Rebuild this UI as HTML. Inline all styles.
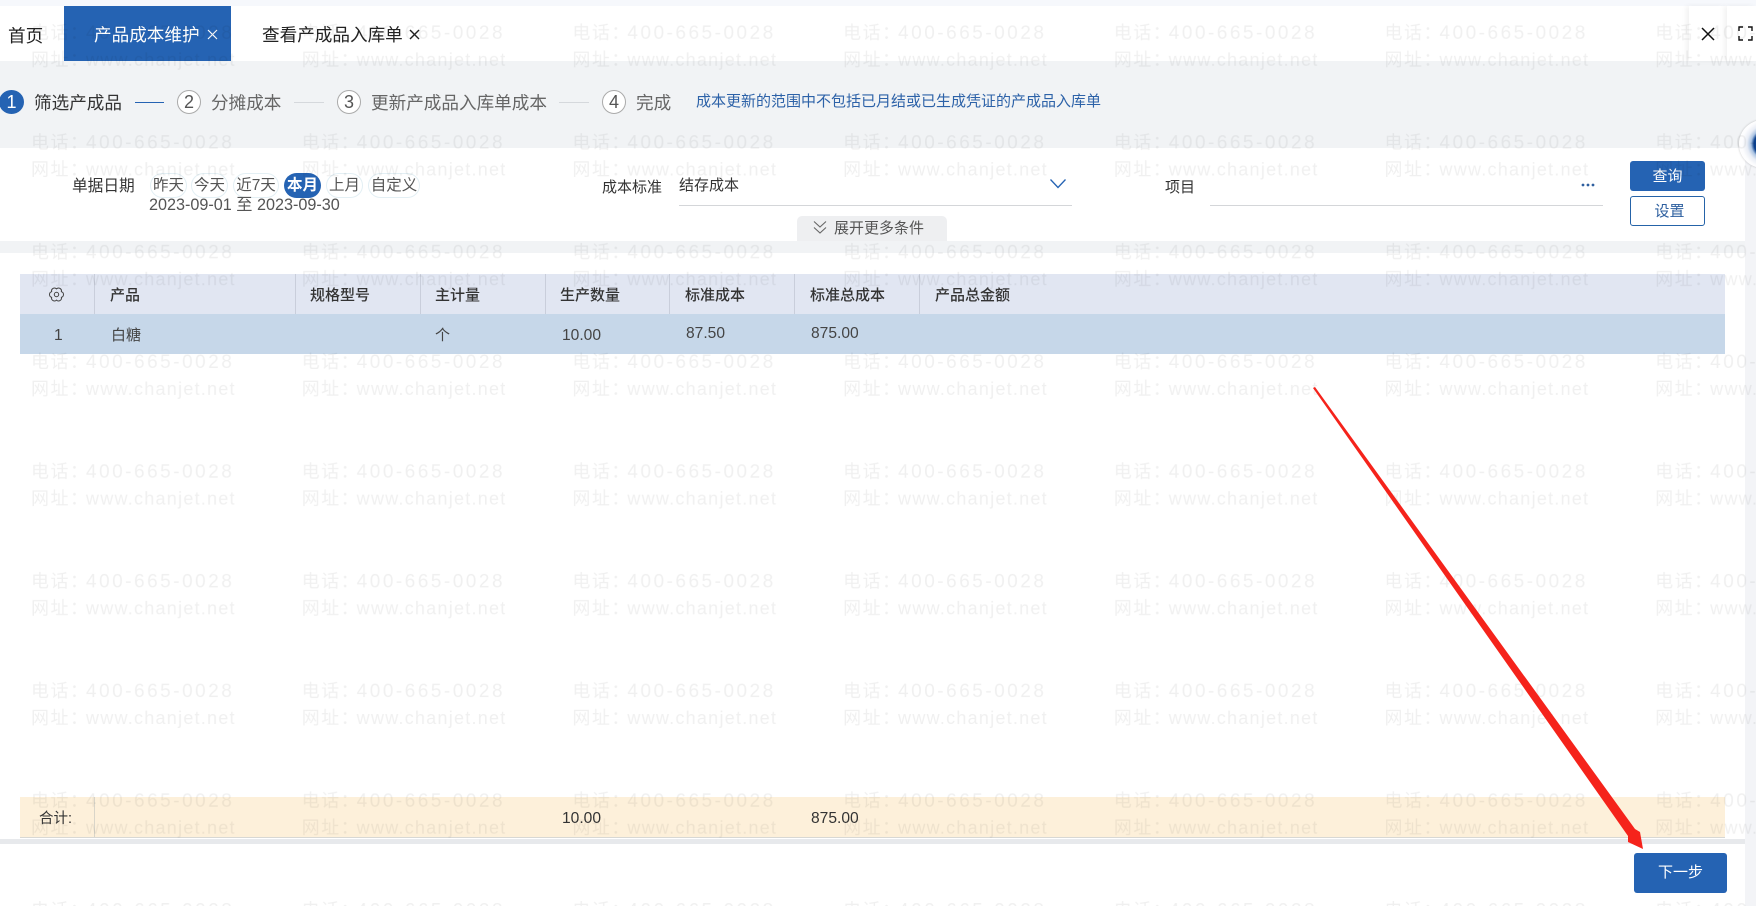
<!DOCTYPE html>
<html lang="zh-CN"><head><meta charset="utf-8"><title>产品成本维护</title>
<style>
html,body{margin:0;padding:0;background:#fff}
#p{position:relative;width:1756px;height:906px;overflow:hidden;background:#fff;font-family:"Liberation Sans","Noto Sans CJK SC",sans-serif;color:#333}
#p div,#p span.a{position:absolute;white-space:nowrap}
.t{line-height:20px;font-size:15px;height:20px}
.c{width:22px;height:22px;border:1px solid #aaa;border-radius:50%;text-align:center;line-height:22px;font-size:18px;color:#555;background:#fff}
.s{font-size:17.6px;line-height:24px;height:24px;top:91px;color:#666}
.l{height:1px;top:102px;background:#d5d8dc}
.chip{top:173px;height:23px;border:1px solid #e3eff4;border-radius:13px;text-align:center;line-height:23px;font-size:15.5px;color:#555;box-sizing:content-box}
.h{top:286px;font-weight:500;color:#333}
.v{width:1px;top:274px;height:40px;background:#c9cedb}
.r{top:326px;color:#444}
.n{font-size:15.6px}
</style></head><body><div id="p">
<div style="left:0;top:0;width:1756px;height:6px;background:#f6f8fc"></div>
<div style="left:0;top:61px;width:1756px;height:87px;background:#f1f3f5"></div>
<div style="left:1745px;top:148px;width:11px;height:758px;background:#f3f4f7"></div>
<div style="left:0;top:241px;width:1745px;height:12px;background:#f1f3f5"></div>

<div style="left:64px;top:6px;width:167px;height:55px;background:#2563b3"></div>
<div class="t" style="left:8px;top:25px;font-size:17.6px;line-height:22px;height:22px;color:#222">首页</div>
<div class="t" style="left:94px;top:24px;font-size:17.6px;line-height:22px;height:22px;color:#fff">产品成本维护</div>
<svg style="position:absolute;left:207px;top:29px" width="11" height="11" viewBox="0 0 11 11"><path d="M1 1L10 10M10 1L1 10" stroke="#fff" stroke-width="1.2" fill="none"/></svg>
<div class="t" style="left:262px;top:24px;font-size:17.6px;line-height:22px;height:22px;color:#222">查看产成品入库单</div>
<svg style="position:absolute;left:409px;top:29px" width="11" height="11" viewBox="0 0 11 11"><path d="M1 1L10 10M10 1L1 10" stroke="#222" stroke-width="1.4" fill="none"/></svg>

<div style="left:1689px;top:6px;width:38px;height:55px;background:#fff;box-shadow:-3px 0 5px rgba(0,0,0,.05)"></div>
<div style="left:1727px;top:6px;width:29px;height:55px;background:#fff;box-shadow:-3px 0 5px rgba(0,0,0,.05)"></div>
<svg style="position:absolute;left:1701px;top:27px" width="14" height="14" viewBox="0 0 14 14"><path d="M1 1L13 13M13 1L1 13" stroke="#111" stroke-width="1.5" fill="none"/></svg>
<svg style="position:absolute;left:1738px;top:26px" width="15" height="15" viewBox="0 0 15 15"><path d="M5 1H1V5M10 1H14V5M5 14H1V10M10 14H14V10" stroke="#111" stroke-width="1.4" fill="none"/></svg>

<div style="left:-1px;top:90px;width:25px;height:24px;border-radius:50%;background:#2563b3;color:#fff;text-align:center;line-height:24px;font-size:18px">1</div>
<div class="s" style="left:34px;color:#333">筛选产成品</div>
<div class="l" style="left:135px;width:29px;background:#2563b3"></div>
<div class="c" style="left:177px;top:90px">2</div>
<div class="s" style="left:211px">分摊成本</div>
<div class="l" style="left:294px;width:30px"></div>
<div class="c" style="left:337px;top:90px">3</div>
<div class="s" style="left:371px">更新产成品入库单成本</div>
<div class="l" style="left:559px;width:30px"></div>
<div class="c" style="left:602px;top:90px">4</div>
<div class="s" style="left:636px">完成</div>
<div class="t" style="left:696px;top:92px;color:#2d62a8">成本更新的范围中不包括已月结或已生成凭证的产成品入库单</div>

<div class="t" style="left:72px;top:177px;font-size:15.7px;color:#333">单据日期</div>
<div class="chip" style="left:150px;width:35px">昨天</div>
<div class="chip" style="left:191px;width:35px">今天</div>
<div class="chip" style="left:233px;width:44px">近7天</div>
<div class="chip" style="left:284px;width:37px;height:25px;border:0;background:#2563b3;color:#fff;font-weight:700;line-height:25px">本月</div>
<div class="chip" style="left:326px;width:35px">上月</div>
<div class="chip" style="left:368px;width:50px">自定义</div>
<div class="t" style="left:149px;top:195px;color:#555;font-size:16.2px">2023-09-01 至 2023-09-30</div>

<div class="t" style="left:602px;top:178px;color:#333">成本标准</div>
<div class="t" style="left:679px;top:176px;color:#333">结存成本</div>
<div style="left:679px;top:205px;width:393px;height:1px;background:#d4d6d9"></div>
<svg style="position:absolute;left:1049px;top:178px" width="18" height="11" viewBox="0 0 18 11"><path d="M1.5 1.5L9 9.5L16.5 1.5" stroke="#2563b3" stroke-width="1.3" fill="none"/></svg>
<div class="t" style="left:1165px;top:178px;color:#333">项目</div>
<div style="left:1210px;top:205px;width:393px;height:1px;background:#d4d6d9"></div>
<svg style="position:absolute;left:1580px;top:183px" width="16" height="4" viewBox="0 0 16 4"><g fill="#2f5f9f"><circle cx="3" cy="2" r="1.4"/><circle cx="8" cy="2" r="1.4"/><circle cx="13" cy="2" r="1.4"/></g></svg>
<div style="left:1630px;top:161px;width:75px;height:30px;background:#2563b3;border-radius:3px;color:#fff;text-align:center;line-height:32px;font-size:15px">查询</div>
<div style="left:1630px;top:196px;height:28px;border:1px solid #2563a8;border-radius:3px;color:#2d5f9f;text-align:center;line-height:30px;font-size:15px;padding-left:4px;width:69px">设置</div>

<div style="left:797px;top:216px;width:150px;height:25px;background:#eeeff1;border-radius:5px 5px 0 0"></div>
<svg style="position:absolute;left:812px;top:220px" width="16" height="15" viewBox="0 0 16 15"><path d="M2 1.5L8 7L14 1.5M2 7.5L8 13L14 7.5" stroke="#666" stroke-width="1.1" fill="none"/></svg>
<div class="t" style="left:834px;top:219px;color:#555">展开更多条件</div>

<div style="left:20px;top:274px;width:1705px;height:40px;background:#e1e6f2"></div>
<div style="left:20px;top:314px;width:1705px;height:40px;background:#c6d7e9"></div>
<div class="v" style="left:94px"></div><div class="v" style="left:295px"></div><div class="v" style="left:420px"></div><div class="v" style="left:545px"></div><div class="v" style="left:669px"></div><div class="v" style="left:794px"></div><div class="v" style="left:919px"></div>
<svg style="position:absolute;left:49px;top:287px" width="15" height="15" viewBox="0 0 15 15"><path d="M7.5 1.9A2.9 2.9 0 0 1 12.35 4.7A2.9 2.9 0 0 1 12.35 10.3A2.9 2.9 0 0 1 7.5 13.1A2.9 2.9 0 0 1 2.65 10.3A2.9 2.9 0 0 1 2.65 4.7A2.9 2.9 0 0 1 7.5 1.9Z" stroke="#444" stroke-width="1" fill="none"/><circle cx="7.5" cy="7.5" r="2.2" stroke="#444" stroke-width="1" fill="none"/></svg>
<div class="t h" style="left:110px">产品</div><div class="t h" style="left:310px">规格型号</div><div class="t h" style="left:435px">主计量</div><div class="t h" style="left:560px">生产数量</div><div class="t h" style="left:685px">标准成本</div><div class="t h" style="left:810px">标准总成本</div><div class="t h" style="left:935px">产品总金额</div>
<div class="t r n" style="left:54px">1</div><div class="t r" style="left:111px">白糖</div><div class="t r" style="left:435px">个</div><div class="t r n" style="left:562px">10.00</div><div class="t r n" style="left:686px;top:324px">87.50</div><div class="t r n" style="left:811px;top:324px">875.00</div>

<div style="left:20px;top:797px;width:1705px;height:40px;background:#fdf0da;border-bottom:1px solid #d8d8d4"></div>
<div style="left:94px;top:797px;width:1px;height:40px;background:#d9d5c9"></div>
<div class="t" style="left:39px;top:809px;font-size:14.5px;color:#333">合计:</div>
<div class="t n" style="left:562px;top:809px;color:#333">10.00</div>
<div class="t n" style="left:811px;top:809px;color:#333">875.00</div>
<div style="left:0;top:839px;width:1745px;height:5px;background:#e7e9ec"></div>
<div style="left:1634px;top:853px;width:93px;height:40px;background:#2563b3;border-radius:3px;color:#fff;text-align:center;line-height:40px;font-size:15px">下一步</div>

<div style="left:1739px;top:120px;width:48px;height:48px;border-radius:50%;background:radial-gradient(circle at 27px 24px,#0a3f8c 0 12px,#aac3e2 15px,#e9edf5 19px,#fdfdfe 24px);box-shadow:0 0 2px rgba(0,0,0,.25)"></div>

<svg style="position:absolute;left:0;top:0" width="1756" height="906">
<defs><pattern id="w" x="31" y="0" width="270.7" height="109.7" patternUnits="userSpaceOnUse">
<g font-family="Liberation Sans,Noto Sans CJK SC,sans-serif" font-size="18" fill="#000" fill-opacity=".06">
<text x="0" y="39" letter-spacing="1.5">电话：</text>
<text x="55" y="39" font-size="19" letter-spacing="2.5">400-665-0028</text>
<text x="0" y="66" letter-spacing="1.5">网址：</text>
<text x="55" y="66" letter-spacing="1.25">www.chanjet.net</text>
</g>
</pattern></defs>
<rect x="31" width="1725" height="906" fill="url(#w)"/>
<polygon points="1313,388 1315,387 1635,829 1640,832 1643,849 1628,842 1628,836" fill="#f5231b"/>
</svg>
</div></body></html>
